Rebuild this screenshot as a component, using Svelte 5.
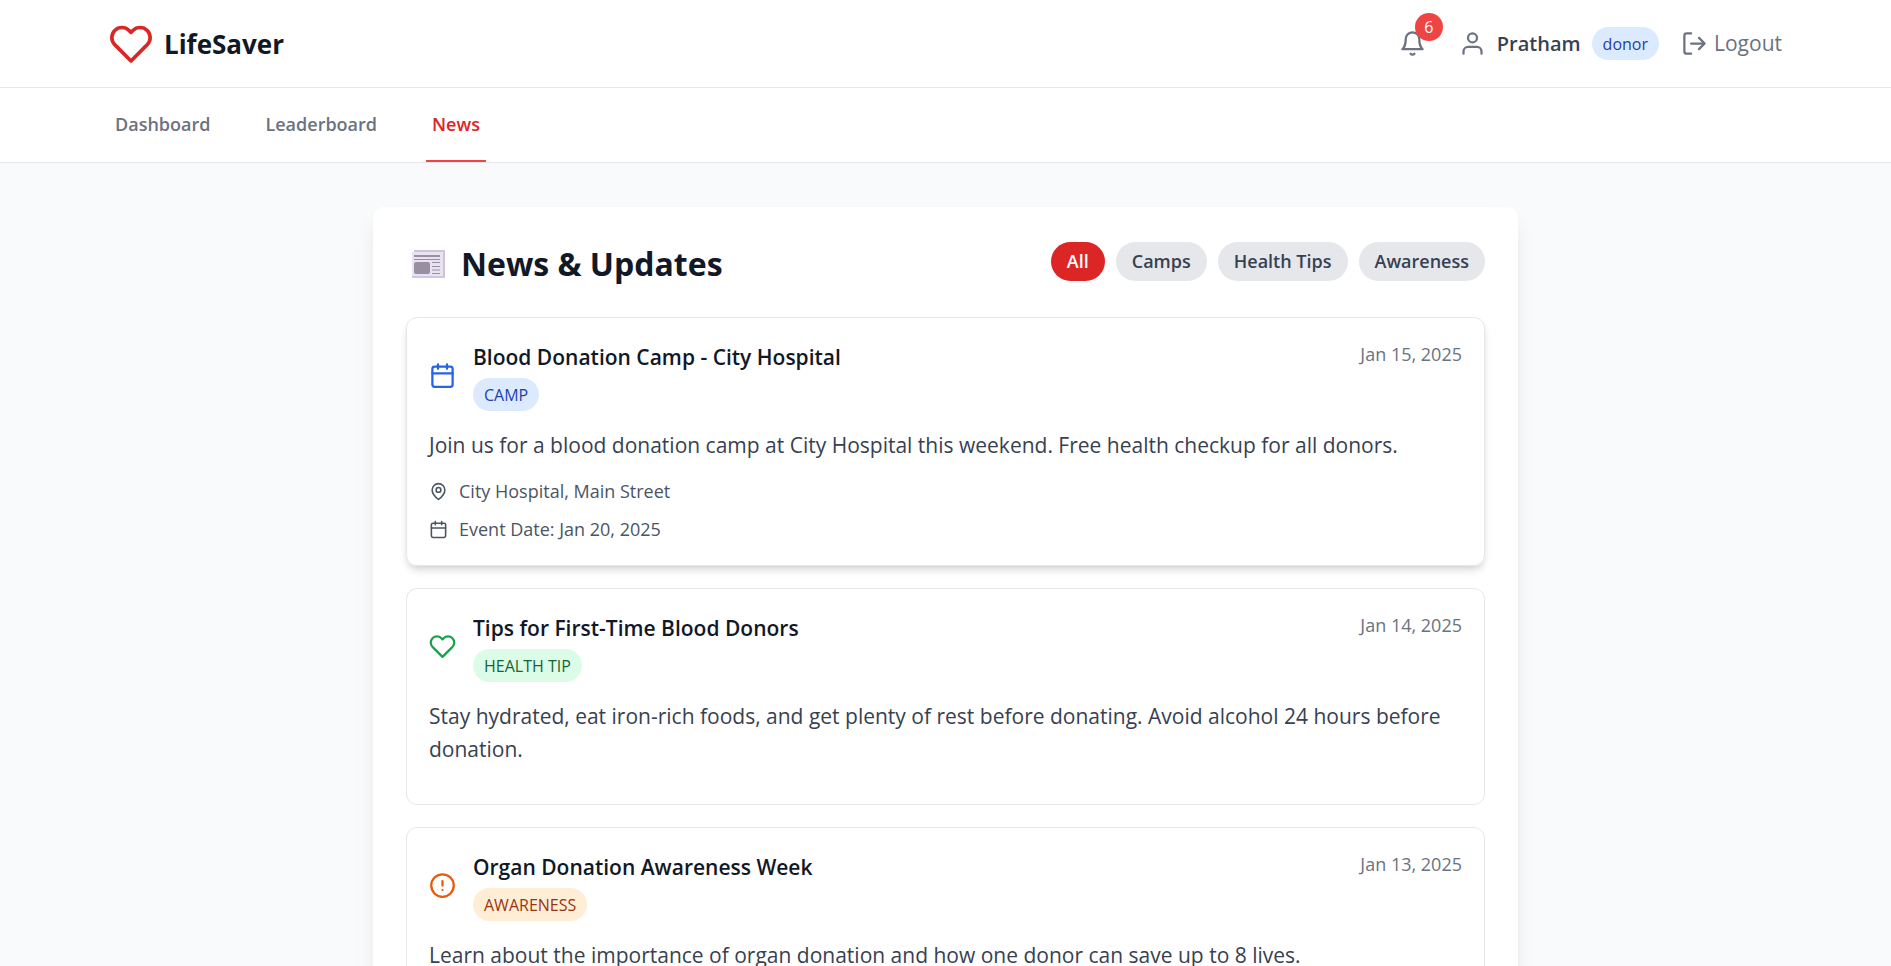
<script>
  let activeTab = "News";
  let activeFilter = "all";

  const tabs = ["Dashboard", "Leaderboard", "News"];

  const filters = [
    { key: "all", label: "All" },
    { key: "camp", label: "Camps" },
    { key: "health", label: "Health Tips" },
    { key: "awareness", label: "Awareness" },
  ];

  const news = [
    {
      type: "camp",
      badge: "CAMP",
      title: "Blood Donation Camp - City Hospital",
      date: "Jan 15, 2025",
      text: "Join us for a blood donation camp at City Hospital this weekend. Free health checkup for all donors.",
      location: "City Hospital, Main Street",
      eventDate: "Jan 20, 2025",
      raised: true,
    },
    {
      type: "health",
      badge: "HEALTH TIP",
      title: "Tips for First-Time Blood Donors",
      date: "Jan 14, 2025",
      text: "Stay hydrated, eat iron-rich foods, and get plenty of rest before donating. Avoid alcohol 24 hours before donation.",
    },
    {
      type: "awareness",
      badge: "AWARENESS",
      title: "Organ Donation Awareness Week",
      date: "Jan 13, 2025",
      text: "Learn about the importance of organ donation and how one donor can save up to 8 lives.",
    },
  ];

  $: visibleNews = news.filter(
    (item) => activeFilter === "all" || item.type === activeFilter
  );
</script>

<style>
  :global(body) {
    margin: 0;
    background: #f9fafb;
    color: #111827;
    font-family: "Open Sans", "Noto Sans", sans-serif;
    font-size: 21px;
    line-height: 33px;
  }

  h1,
  h2,
  p {
    margin: 0;
  }

  button {
    font: inherit;
    border: 0;
    cursor: pointer;
  }

  svg {
    display: block;
    flex: none;
  }

  .icon {
    width: 27px;
    height: 27px;
    fill: none;
    stroke: currentColor;
    stroke-width: 2;
    stroke-linecap: round;
    stroke-linejoin: round;
  }

  .icon.logo {
    width: 44px;
    height: 44px;
    color: #dc2626;
  }

  .icon.small {
    width: 19px;
    height: 19px;
  }

  .bar {
    background: #fff;
    border-bottom: 1px solid #e5e7eb;
  }

  .inner {
    box-sizing: border-box;
    max-width: 1761px;
    margin: 0 auto;
    padding: 0 44px;
    display: flex;
    align-items: center;
  }

  .top {
    height: 87px;
    justify-content: space-between;
  }

  .brand {
    display: flex;
    align-items: center;
    gap: 11px;
    font-size: 26px;
    font-weight: 700;
    line-height: 36px;
  }

  .account {
    display: flex;
    align-items: center;
    color: #6b7280;
  }

  .bell {
    position: relative;
    margin-right: 33px;
    padding: 0;
    background: none;
    color: #6b7280;
  }

  .count {
    position: absolute;
    top: -17px;
    right: -17px;
    width: 28px;
    height: 28px;
    border-radius: 14px;
    background: #ef4444;
    color: #fff;
    font-size: 16px;
    line-height: 28px;
    text-align: center;
  }

  .user {
    display: flex;
    align-items: center;
    gap: 11px;
    margin-right: 22px;
  }

  .name {
    color: #374151;
    font-size: 20px;
    font-weight: 600;
  }

  .badge {
    display: inline-block;
    padding: 1px 11px 0;
    border-radius: 17px;
    background: #dbeafe;
    color: #1e40af;
    font-size: 16px;
    line-height: 32px;
  }

  .badge.health {
    background: #dcfce7;
    color: #166534;
  }

  .badge.awareness {
    background: #ffedd5;
    color: #9a3412;
  }

  .logout {
    display: flex;
    align-items: center;
    gap: 6px;
    padding: 0;
    background: none;
    color: #6b7280;
  }

  .tabs {
    gap: 43px;
  }

  .tab {
    padding: 22px 6px;
    border-bottom: 2px solid transparent;
    color: #6b7280;
    font-size: 18px;
    font-weight: 600;
    line-height: 28px;
    text-decoration: none;
  }

  .tab.active {
    border-color: #ef4444;
    color: #dc2626;
  }

  main {
    box-sizing: border-box;
    max-width: 1233px;
    margin: 0 auto;
    padding: 44px;
  }

  .panel {
    padding: 33px;
    border-radius: 11px;
    background: #fff;
    box-shadow: 0 14px 21px -4px rgba(0, 0, 0, 0.1),
      0 6px 8px -6px rgba(0, 0, 0, 0.1);
  }

  .panel-head {
    display: flex;
    align-items: flex-start;
    justify-content: space-between;
    margin-bottom: 29px;
  }

  .heading {
    display: flex;
    align-items: center;
    gap: 11px;
    font-size: 32px;
    font-weight: 700;
    line-height: 48px;
  }

  .paper {
    width: 44px;
    height: 44px;
  }

  .filters {
    display: flex;
    gap: 11px;
    padding-top: 2px;
  }

  .filter {
    padding: 0 16px;
    border-radius: 20px;
    background: #e5e7eb;
    color: #374151;
    font-size: 18px;
    font-weight: 600;
    line-height: 39px;
  }

  .filter.active {
    background: #dc2626;
    color: #fff;
  }

  .list {
    display: flex;
    flex-direction: column;
    gap: 22px;
  }

  .card {
    padding: 22px;
    border: 1px solid #e5e7eb;
    border-radius: 11px;
  }

  .card.raised {
    box-shadow: 0 6px 8px -1px rgba(0, 0, 0, 0.1),
      0 3px 6px -2px rgba(0, 0, 0, 0.1);
  }

  .card-head {
    display: flex;
    align-items: flex-start;
    justify-content: space-between;
    margin-bottom: 18px;
  }

  .card-title {
    display: flex;
    align-items: center;
    gap: 17px;
    color: #2563eb;
  }

  .card-title.health {
    color: #16a34a;
  }

  .card-title.awareness {
    color: #ea580c;
  }

  .stack {
    display: flex;
    flex-direction: column;
    align-items: flex-start;
    gap: 3px;
  }

  h2 {
    color: #111827;
    font-size: 21px;
    font-weight: 600;
    line-height: 35px;
  }

  .date {
    color: #6b7280;
    font-size: 18px;
    line-height: 29px;
  }

  .text {
    margin-bottom: 16px;
    color: #374151;
  }

  .meta {
    display: flex;
    flex-direction: column;
    gap: 11px;
    color: #4b5563;
    font-size: 18px;
    line-height: 27px;
  }

  .meta div {
    display: flex;
    align-items: center;
    gap: 11px;
  }
</style>

{#snippet heart(cls)}
  <svg class="icon {cls}" viewBox="0 0 24 24">
    <path d="M20.84 4.61a5.5 5.5 0 0 0-7.78 0L12 5.67l-1.06-1.06a5.5 5.5 0 0 0-7.78 7.78l1.06 1.06L12 21.23l7.78-7.78 1.06-1.06a5.5 5.5 0 0 0 0-7.78z" />
  </svg>
{/snippet}

{#snippet calendar(cls)}
  <svg class="icon {cls}" viewBox="0 0 24 24">
    <rect x="3" y="4" width="18" height="18" rx="2" />
    <path d="M16 2v4M8 2v4M3 10h18" />
  </svg>
{/snippet}

<header class="bar">
  <div class="inner top">
    <div class="brand">
      {@render heart("logo")}
      <span>LifeSaver</span>
    </div>

    <div class="account">
      <button class="bell" aria-label="Notifications">
        <svg class="icon" viewBox="0 0 24 24">
          <path d="M18 8A6 6 0 0 0 6 8c0 7-3 9-3 9h18s-3-2-3-9" />
          <path d="M13.73 21a2 2 0 0 1-3.46 0" />
        </svg>
        <span class="count">6</span>
      </button>
      <div class="user">
        <svg class="icon" viewBox="0 0 24 24">
          <path d="M20 21v-2a4 4 0 0 0-4-4H8a4 4 0 0 0-4 4v2" />
          <circle cx="12" cy="7" r="4" />
        </svg>
        <span class="name">Pratham</span>
        <span class="badge">donor</span>
      </div>
      <button class="logout">
        <svg class="icon" viewBox="0 0 24 24">
          <path d="M9 21H5a2 2 0 0 1-2-2V5a2 2 0 0 1 2-2h4M16 17l5-5-5-5M21 12H9" />
        </svg>
        Logout
      </button>
    </div>
  </div>
</header>

<nav class="bar">
  <div class="inner tabs">
    {#each tabs as tab}
      <a
        class="tab"
        class:active={tab === activeTab}
        href="#{tab.toLowerCase()}"
        on:click={() => (activeTab = tab)}>{tab}</a>
    {/each}
  </div>
</nav>

<main>
  <section class="panel">
    <div class="panel-head">
      <h1 class="heading">
        <svg class="paper" viewBox="0 0 44 44">
          <path d="M8 8h31v28h-2V10H8z" fill="#cdc4d6" />
          <rect x="6" y="10" width="31" height="26" rx="1" fill="#e9e2f0" />
          <path d="M6 34h31v1a1 1 0 0 1-1 1H7a1 1 0 0 1-1-1z" fill="#d3c3e6" />
          <path d="M8 13h26v2H8zM8 17h26v1H8zM26 20h8v1h-8zM26 24h8v1h-8zM26 31h8v1h-8z" fill="#998fa3" />
          <path d="M26 27h8v2h-8z" fill="#c3bacb" />
          <rect x="8" y="20" width="16" height="12" rx="2" fill="#998fa3" />
        </svg>
        News &amp; Updates
      </h1>
      <div class="filters">
        {#each filters as filter}
          <button
            class="filter"
            class:active={filter.key === activeFilter}
            on:click={() => (activeFilter = filter.key)}>{filter.label}</button>
        {/each}
      </div>
    </div>

    <div class="list">
      {#each visibleNews as item}
        <article class="card" class:raised={item.raised}>
          <div class="card-head">
            <div class="card-title {item.type}">
              {#if item.type === "camp"}
                {@render calendar("")}
              {:else if item.type === "health"}
                {@render heart("")}
              {:else}
                <svg class="icon" viewBox="0 0 24 24">
                  <circle cx="12" cy="12" r="10" />
                  <path d="M12 8v4M12 16h.01" />
                </svg>
              {/if}
              <div class="stack">
                <h2>{item.title}</h2>
                <span class="badge {item.type}">{item.badge}</span>
              </div>
            </div>
            <span class="date">{item.date}</span>
          </div>

          <p class="text">{item.text}</p>

          {#if item.location}
            <div class="meta">
              <div>
                <svg class="icon small" viewBox="0 0 24 24">
                  <path d="M20 10c0 6-8 12-8 12s-8-6-8-12a8 8 0 0 1 16 0z" />
                  <circle cx="12" cy="10" r="3" />
                </svg>
                {item.location}
              </div>
              <div>
                {@render calendar("small")}
                Event Date: {item.eventDate}
              </div>
            </div>
          {/if}
        </article>
      {/each}
    </div>
  </section>
</main>
